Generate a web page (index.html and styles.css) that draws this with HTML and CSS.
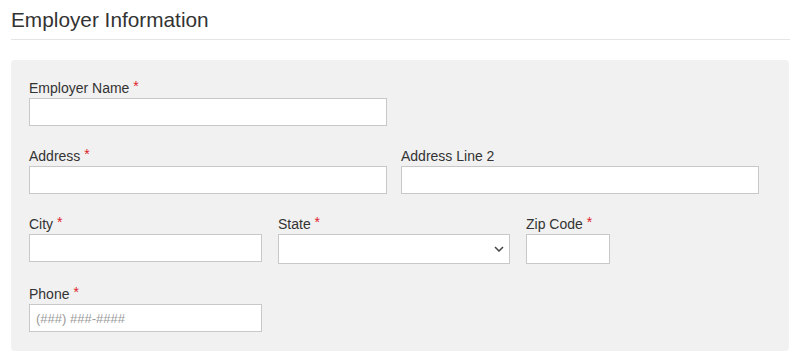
FILE: index.html
```html
<!DOCTYPE html>
<html lang="en">
  <head>
    <meta charset="UTF-8" />
    <meta name="viewport" content="width=device-width, initial-scale=1.0" />
    <title>Employer Information</title>
    <link rel="stylesheet" href="styles.css">
  </head>

  <body>
    <div class="page">
      <h2 class="section-title">Employer Information</h2>

      <div class="panel">
        <div class="row">
          <div class="field col-half">
            <label for="employer">Employer Name <span class="req">*</span></label>
            <input id="employer" type="text" />
          </div>
        </div>

        <div class="row">
          <div class="field col-half">
            <label for="address">Address <span class="req">*</span></label>
            <input id="address" type="text" />
          </div>
          <div class="field col-half">
            <label for="address2">Address Line 2</label>
            <input id="address2" type="text" />
          </div>
        </div>

        <div class="row row-thirds">
          <div class="field col-third">
            <label for="city">City <span class="req">*</span></label>
            <input id="city" type="text" />
          </div>
          <div class="field col-state">
            <label for="state">State <span class="req">*</span></label>
            <div class="select-wrap">
              <select id="state">
                <option></option>
                <option>AL</option>
                <option>AK</option>
                <option>AZ</option>
              </select>
              <svg class="chevron" width="10" height="6" viewBox="0 0 10 6">
                <path d="M1 1 L5 5 L9 1" fill="none" stroke="#444" stroke-width="1.5" />
              </svg>
            </div>
          </div>
          <div class="field col-zip">
            <label for="zip">Zip Code <span class="req">*</span></label>
            <input id="zip" class="tall" type="text" />
          </div>
        </div>

        <div class="row">
          <div class="field col-third">
            <label for="phone">Phone <span class="req">*</span></label>
            <input id="phone" type="text" placeholder="(###) ###-####" />
          </div>
        </div>
      </div>
    </div>
  </body>
</html>
```

FILE: styles.css
```css
body {
  margin: 0;
  font-family: "Liberation Sans", Arial, sans-serif;
  color: #333;
  background-color: #fff;
}
.page {
  width: 779px;
  padding-left: 11px;
}
.section-title {
  margin: 8px 0 0;
  padding-bottom: 7px;
  font-size: 20.8px;
  line-height: 24px;
  font-weight: normal;
  color: #333;
  border-bottom: 1px solid #e5e5e5;
}
.panel {
  width: 760px;
  margin-top: 20px;
  padding: 17px 0 0 18px;
  background-color: #f1f1f1;
  border-radius: 4px;
}
.row {
  display: flex;
  gap: 14px;
}
.row-thirds {
  gap: 16px;
}
.field {
  margin-bottom: 19px;
}
.field label {
  display: block;
  padding-top: 1px;
  font-size: 14px;
  line-height: 20px;
  color: #333;
}
.req {
  color: #e0202a;
  position: relative;
  top: -2px;
}
.field input,
.field select {
  display: block;
  width: 100%;
  height: 28px;
  box-sizing: border-box;
  padding: 0 6px;
  border: 1px solid #c8c8c8;
  border-radius: 0;
  background-color: #fff;
  font-family: inherit;
  font-size: 13px;
  color: #333;
  outline: none;
}
.field input.tall,
.field select {
  height: 30px;
}
.field input::placeholder {
  color: #9a9a9a;
}
.field select {
  appearance: none;
  -webkit-appearance: none;
}
.select-wrap {
  position: relative;
}
.chevron {
  position: absolute;
  right: 6px;
  top: 12px;
  pointer-events: none;
}
.col-half {
  width: 358px;
}
.col-third {
  width: 233px;
}
.col-state {
  width: 232px;
}
.col-zip {
  width: 84px;
}
```
